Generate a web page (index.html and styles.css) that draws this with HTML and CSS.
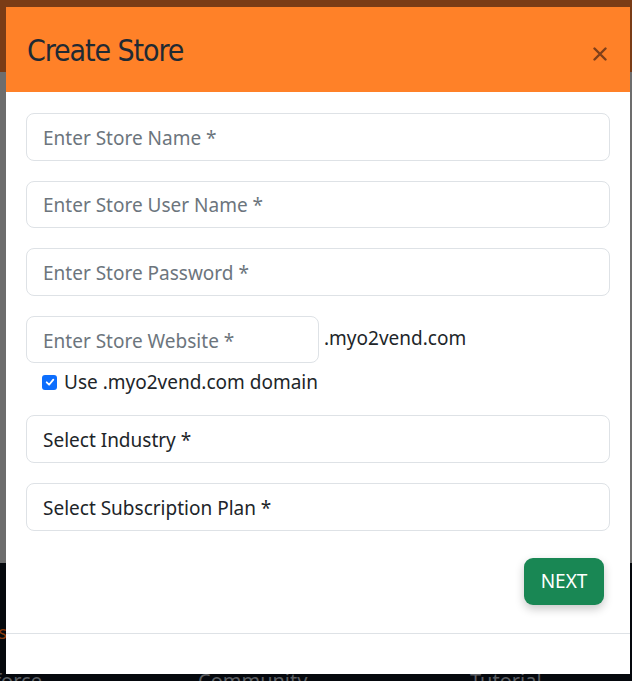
FILE: index.html
```html
<!DOCTYPE html>
<html lang="en">
<head>
<meta charset="utf-8">
<title>Create Store</title>
<link rel="stylesheet" href="styles.css">
</head>
<body>
  <div class="page">
    <header class="site-head"></header>
    <main class="site-main"></main>
    <footer class="site-foot">
      <span class="foot-accent">Shortcuts</span>
      <span class="foot-link foot-a">Salesforce</span>
      <span class="foot-link foot-b">Community</span>
      <span class="foot-link foot-c">Tutorial</span>
    </footer>
  </div>

  <div class="backdrop">
    <div class="modal">
      <div class="modal-header">
        <h2 class="modal-title">Create Store</h2>
        <button class="btn-close" type="button" aria-label="Close">
          <svg width="14" height="14" viewBox="0 0 14 14"><path d="M1.5 1.5 L12.5 12.5 M12.5 1.5 L1.5 12.5" stroke="currentColor" stroke-width="2.4" stroke-linecap="round"/></svg>
        </button>
      </div>
      <form class="modal-body">
        <input class="field" type="text" placeholder="Enter Store Name *">
        <input class="field" type="text" placeholder="Enter Store User Name *">
        <input class="field" type="password" placeholder="Enter Store Password *">
        <div class="domain-group">
          <div class="domain-row">
            <input class="field field-short" type="text" placeholder="Enter Store Website *">
            <span class="suffix">.myo2vend.com</span>
          </div>
          <label class="check">
            <span class="check-box"><svg width="12" height="12" viewBox="0 0 20 20"><path d="M4.5 10.5 L8.5 14.5 L15.5 6" fill="none" stroke="#fff" stroke-width="3" stroke-linecap="round" stroke-linejoin="round"/></svg></span>
            Use .myo2vend.com domain
          </label>
        </div>
        <div class="field select">Select Industry *</div>
        <div class="field select">Select Subscription Plan *</div>
        <div class="actions">
          <button class="btn-next" type="button">NEXT</button>
        </div>
      </form>
      <div class="modal-footer"></div>
    </div>
  </div>
</body>
</html>
```
FILE: styles.css
```css
* { box-sizing: border-box; }

html, body {
  margin: 0;
  height: 100%;
}

body {
  font-family: "Segoe UI", "Noto Sans", "Open Sans", sans-serif;
  color: #212529;
  overflow: hidden;
  background: #6d6d6d;
}

/* page underneath the dialog, already dimmed */
.page {
  display: flex;
  flex-direction: column;
  height: 100%;
}

.site-head {
  height: 72px;
  background: #7a3c16;
}

.site-main {
  height: 491px;
  background: #6d6d6d;
}

.site-foot {
  flex: 1;
  background: #05080d;
  font-size: 20px;
  color: #5b5e62;
  line-height: 1;
  position: relative;
}

.foot-link,
.foot-accent {
  position: absolute;
  white-space: nowrap;
}

.foot-link { top: 108px; }
.foot-a { left: -54px; }
.foot-b { left: 198px; }
.foot-c { left: 470px; }

.foot-accent {
  top: 60px;
  right: calc(100% - 7px);
  color: #8a3a0c;
  font-size: 18px;
}

/* dialog layer */
.backdrop {
  position: fixed;
  inset: 0;
  padding: 7px 2px 0 6px;
}

.modal {
  width: 624px;
  height: 667px;
  background: #fff;
  display: flex;
  flex-direction: column;
}

.modal-header {
  height: 85px;
  flex: none;
  background: #ff8128;
  display: flex;
  align-items: center;
  justify-content: space-between;
  padding: 0 22px 0 21px;
}

.modal-title {
  margin: 0;
  font-family: "Liberation Sans Narrow", "DejaVu Sans Condensed", sans-serif;
  font-weight: 400;
  font-size: 30px;
  color: #1f2a33;
  letter-spacing: -1.1px;
  padding-top: 1px;
}

.btn-close {
  border: 0;
  background: none;
  padding: 0;
  color: #80401a;
  display: flex;
  margin-top: 8px;
  margin-right: 1px;
}

.modal-body {
  padding: 21px 20px 0 20px;
  display: flex;
  flex-direction: column;
  gap: 20px;
}

.field {
  display: block;
  width: 100%;
  height: 47.6px;
  padding: 9px 16px 7px;
  font: inherit;
  font-size: 19px;
  line-height: 30px;
  color: #212529;
  background: #fff;
  border: 1px solid #dee2e6;
  border-radius: 8px;
  outline: none;
}

.field::placeholder { color: #6c757d; }

.domain-group {
  display: flex;
  flex-direction: column;
  gap: 6px;
}

.domain-row {
  display: flex;
  align-items: flex-start;
  gap: 5px;
}

.field-short { width: 293px; }

.suffix {
  font-size: 19px;
  line-height: 45px;
  color: #212529;
}

.check {
  display: flex;
  align-items: center;
  gap: 7px;
  padding-left: 16px;
  font-size: 19px;
  line-height: 26px;
}

.check-box {
  width: 15px;
  height: 15px;
  background: #0d6efd;
  border-radius: 3px;
  display: flex;
  align-items: center;
  justify-content: center;
}

.select { color: #212529; }

.actions {
  display: flex;
  justify-content: flex-end;
  padding: 7px 6px 0 0;
}

.btn-next {
  width: 80px;
  height: 47px;
  border: 0;
  border-radius: 9px;
  background: #198754;
  color: #fff;
  font: inherit;
  font-size: 19px;
  box-shadow: 0 4px 10px rgba(0, 0, 0, 0.22);
}

.modal-footer {
  margin-top: auto;
  height: 41px;
  flex: none;
  border-top: 1px solid #dee2e6;
}
```
